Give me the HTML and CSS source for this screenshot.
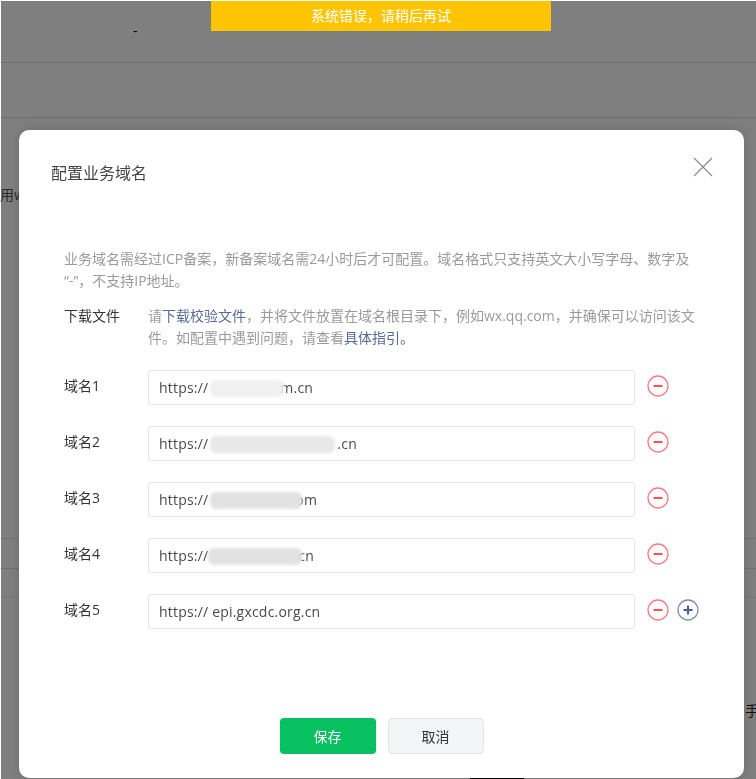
FILE: index.html
```html
<!DOCTYPE html>
<html lang="zh-CN">
<head>
<meta charset="UTF-8" />
<meta name="viewport" content="width=device-width, initial-scale=1" />
<title>配置业务域名</title>
<link rel="stylesheet" href="styles.css">
</head>
<body>

  <!-- Page behind the dialog -->
  <div class="page">
    <div class="page-row row-head"><span class="dash">-</span></div>
    <div class="page-row row-sub"></div>
    <div class="page-row row-info">用w</div>
    <div class="page-row row-a"></div>
    <div class="page-row row-b"></div>
    <div class="page-row row-c">手</div>
    <div class="foot-mark"></div>
  </div>

  <div class="overlay"></div>

  <div class="toast">系统错误，请稍后再试</div>

  <!-- Dialog -->
  <div class="dialog">
    <div class="dialog-head">
      <h3 class="dialog-title">配置业务域名</h3>
      <svg class="close-icon" viewBox="0 0 20 20" width="20" height="20">
        <path d="M1 1 L19 19 M19 1 L1 19" stroke="#8c8c8c" stroke-width="1.2" fill="none" />
      </svg>
    </div>

    <div class="dialog-body">
      <p class="notice">业务域名需经过ICP备案，新备案域名需24小时后才可配置。域名格式只支持英文大小写字母、数字及“-”，不支持IP地址。</p>

      <div class="form-row download-row">
        <div class="form-label">下载文件</div>
        <p class="download-text">请<a class="link">下载校验文件</a>，并将文件放置在域名根目录下，例如wx.qq.com，并确保可以访问该文件。如配置中遇到问题，请查看<a class="link">具体指引。</a></p>
      </div>

      <div class="form-row domain-row">
        <div class="form-label">域名1</div>
        <div class="domain-input">https://<span class="masked mask-1"></span>m.cn</div>
        <svg class="circle-btn" viewBox="0 0 22 22" width="22" height="22"><circle cx="11" cy="11" r="10" fill="none" stroke="#fa7a7f" stroke-width="1.3" /><path d="M6.5 11 H15.5" stroke="#f2545b" stroke-width="2" /></svg>
      </div>

      <div class="form-row domain-row">
        <div class="form-label">域名2</div>
        <div class="domain-input">https://<span class="masked mask-2"></span>.cn</div>
        <svg class="circle-btn" viewBox="0 0 22 22" width="22" height="22"><circle cx="11" cy="11" r="10" fill="none" stroke="#fa7a7f" stroke-width="1.3" /><path d="M6.5 11 H15.5" stroke="#f2545b" stroke-width="2" /></svg>
      </div>

      <div class="form-row domain-row">
        <div class="form-label">域名3</div>
        <div class="domain-input">https://<span class="masked mask-3"></span>om</div>
        <svg class="circle-btn" viewBox="0 0 22 22" width="22" height="22"><circle cx="11" cy="11" r="10" fill="none" stroke="#fa7a7f" stroke-width="1.3" /><path d="M6.5 11 H15.5" stroke="#f2545b" stroke-width="2" /></svg>
      </div>

      <div class="form-row domain-row">
        <div class="form-label">域名4</div>
        <div class="domain-input">https://<span class="masked mask-4"></span>cn</div>
        <svg class="circle-btn" viewBox="0 0 22 22" width="22" height="22"><circle cx="11" cy="11" r="10" fill="none" stroke="#fa7a7f" stroke-width="1.3" /><path d="M6.5 11 H15.5" stroke="#f2545b" stroke-width="2" /></svg>
      </div>

      <div class="form-row domain-row">
        <div class="form-label">域名5</div>
        <div class="domain-input">https:// epi.gxcdc.org.cn</div>
        <svg class="circle-btn" viewBox="0 0 22 22" width="22" height="22"><circle cx="11" cy="11" r="10" fill="none" stroke="#fa7a7f" stroke-width="1.3" /><path d="M6.5 11 H15.5" stroke="#f2545b" stroke-width="2" /></svg>
        <svg class="circle-btn" viewBox="0 0 22 22" width="22" height="22"><circle cx="11" cy="11" r="10" fill="none" stroke="#7f8fb5" stroke-width="1.3" /><path d="M6.5 11 H15.5 M11 6.5 V15.5" stroke="#4a6096" stroke-width="2" /></svg>
      </div>
    </div>

    <div class="dialog-foot">
      <button class="btn btn-save">保存</button>
      <button class="btn btn-cancel">取消</button>
    </div>
  </div>

</body>
</html>
```

FILE: styles.css
```css
* { box-sizing: border-box; }

html, body {
  margin: 0;
  padding: 0;
  height: 100%;
}
body {
  font-family: "Open Sans", "Noto Sans CJK SC", sans-serif;
  font-size: 14px;
  color: #353535;
  background: #fff;
  overflow: hidden;
}

/* Page behind the dialog */
.page {
  height: 779px;
  overflow: hidden;
}
.page-row {
  border-bottom: 1px solid #dfdfdf;
}
.row-head {
  height: 63px;
  padding: 21px 0 0 133px;
  color: #000;
}
.row-sub { height: 55px; }
.row-info {
  height: 421px;
  padding-top: 66px;
  color: #555;
  border-bottom-color: #e4e4e4;
}
.row-a { height: 30px; }
.row-b { height: 29px; border-bottom-color: #f2f2f2; }
.row-c {
  height: 180px;
  border: 0;
  padding-top: 102px;
  text-align: right;
  color: #222;
  margin-right: -3px;
}
.foot-mark {
  width: 54px;
  height: 1px;
  margin-left: 470px;
  background: #000;
}

.overlay {
  position: fixed;
  inset: 1px 0 0 1px;
  background: rgba(0, 0, 0, 0.5);
}

.toast {
  position: fixed;
  top: 1px;
  left: 211px;
  width: 340px;
  height: 30px;
  line-height: 29px;
  background: #ffc400;
  color: #fff;
  text-align: center;
}

/* Dialog */
.dialog {
  position: fixed;
  top: 130px;
  left: 19px;
  width: 725px;
  height: 648px;
  background: #fff;
  border-radius: 10px;
  box-shadow: 0 0 12px rgba(0, 0, 0, 0.15);
  display: flex;
  flex-direction: column;
}
.dialog-head {
  display: flex;
  justify-content: space-between;
  align-items: flex-start;
  padding: 27px 31px 0 32px;
  height: 118px;
}
.dialog-title {
  margin: 4px 0 0;
  font-size: 16px;
  font-weight: 400;
  line-height: 24px;
  color: #444;
}
.close-icon { display: block; }

.dialog-body {
  flex: 1;
  padding: 0 45px;
}
.notice {
  margin: 0 0 13px;
  width: 630px;
  line-height: 22px;
  color: #9a9a9a;
}
.form-row {
  display: flex;
}
.form-label {
  width: 84px;
  flex: none;
  color: #353535;
}
.download-row {
  margin-bottom: 21px;
  line-height: 22px;
}
.download-text {
  margin: 0;
  flex: 1;
  color: #9a9a9a;
}
.link {
  color: #576b95;
}

.domain-row {
  align-items: center;
  height: 35px;
  margin-bottom: 21px;
}
.domain-row .form-label {
  margin-bottom: 5px;
}
.domain-input {
  width: 487px;
  height: 35px;
  line-height: 33px;
  padding: 0 10px;
  border: 1px solid #e4e6eb;
  border-radius: 3px;
  color: #4a4a4a;
  letter-spacing: 0.2px;
  white-space: nowrap;
}
.masked {
  display: inline-block;
  height: 17px;
  vertical-align: -4px;
  border-radius: 6px;
  filter: blur(1.5px);
}
.mask-1 { width: 74px; margin: 0 -4px 0 2px; background: #f0f0f0; }
.mask-2 { width: 125px; margin: 0 2px 0 2px; background: #e8e8e8; }
.mask-3 { width: 92px; margin: 0 -7px 0 2px; background: #e2e2e2; }
.mask-4 { width: 94px; margin-right: -4px; background: #e2e2e2; }

.circle-btn {
  flex: none;
  margin: 0 0 4px 12px;
  display: block;
}
.circle-btn + .circle-btn {
  margin-left: 8px;
}

.dialog-foot {
  display: flex;
  justify-content: center;
  gap: 12px;
  padding-bottom: 24px;
}
.btn {
  width: 96px;
  height: 36px;
  font: inherit;
  border-radius: 4px;
  border: 1px solid transparent;
  cursor: pointer;
}
.btn-save {
  background: #07c160;
  color: #fff;
}
.btn-cancel {
  background: #f4f5f7;
  border-color: #e4e6eb;
  color: #353535;
}
```
